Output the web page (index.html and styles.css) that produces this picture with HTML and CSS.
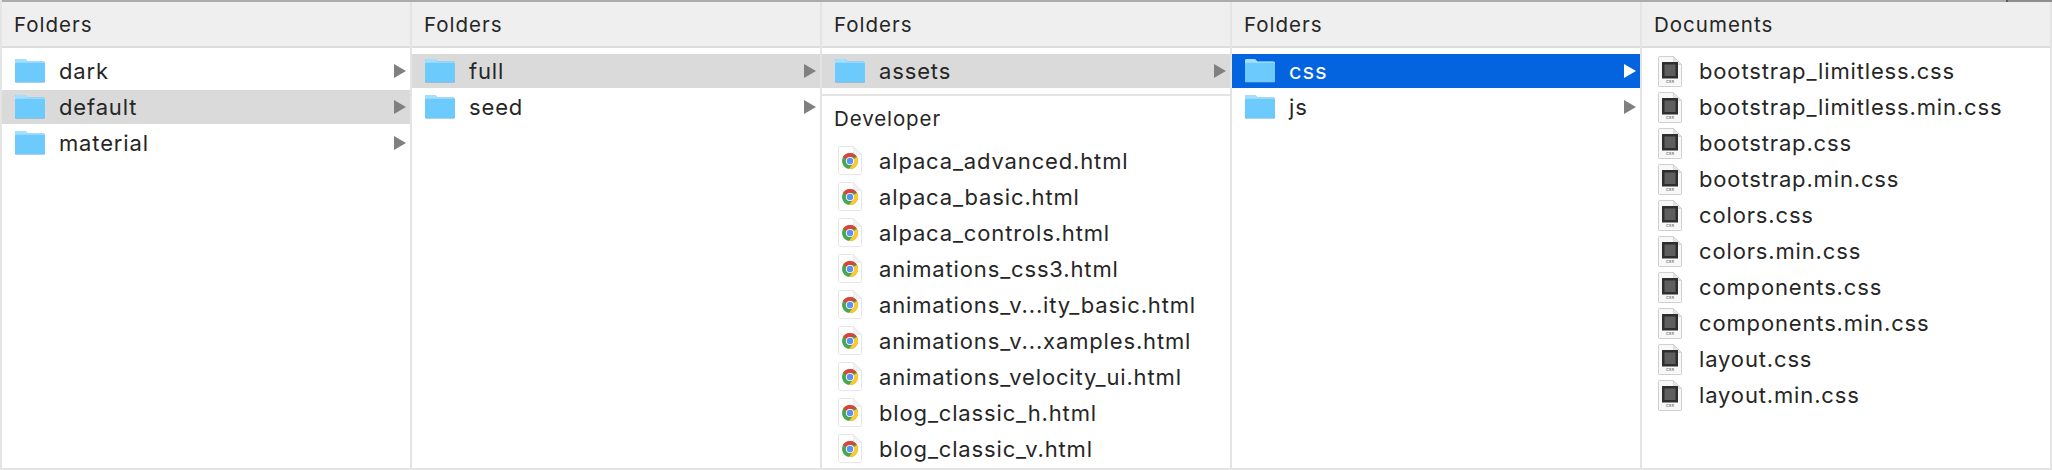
FILE: index.html
```html
<!DOCTYPE html>
<html lang="en">
<head>
    <meta charset="UTF-8">
    <title>Folders</title>
    <link rel="stylesheet" href="styles.css">
</head>
<body>
    <svg class="defs" width="0" height="0">
        <symbol id="folder" viewBox="0 0 30 24">
            <path d="M1 23.5 A1 1 0 0 1 0 22.5 V1.5 A1.5 1.5 0 0 1 1.5 0 H9 A2 2 0 0 1 11 1 L12.5 2.5 H28.5 A1.5 1.5 0 0 1 30 4 V22.5 A1 1 0 0 1 29 23.5 Z" fill="#4fa8d8"/>
            <path d="M1 22.4 A1 1 0 0 1 0 21.4 V1.5 A1.5 1.5 0 0 1 1.5 0 H9 A2 2 0 0 1 11 1 L12.5 2.5 H28.5 A1.5 1.5 0 0 1 30 4 V21.4 A1 1 0 0 1 29 22.4 Z" fill="#a3dfff"/>
            <path d="M0 5 A1.5 1.5 0 0 1 1.5 3.7 H28.5 A1.5 1.5 0 0 1 30 5 V21.4 A1 1 0 0 1 29 22.4 H1 A1 1 0 0 1 0 21.4 Z" fill="#6ccafc"/>
        </symbol>
        <symbol id="chrome" viewBox="0 0 24 29">
            <path d="M.5 1.5 A1 1 0 0 1 1.5 .5 H15.5 L23.5 8.5 V27.5 A1 1 0 0 1 22.5 28.5 H1.5 A1 1 0 0 1 .5 27.5 Z" fill="#fff" stroke="#e6e6e6"/>
            <path d="M15.5 .5 V8.5 H23.5 Z" fill="#f1f1f1" stroke="#e6e6e6" stroke-width=".6"/>
            <circle cx="12" cy="15" r="8" fill="#4aa654"/>
            <path d="M5.1 11 A8 8 0 0 1 18.9 11 H12 A4 4 0 0 0 8.5 13 Z" fill="#dc4437"/>
            <path d="M19 11 A8 8 0 0 1 11 23 L15.5 17 A4 4 0 0 0 15.5 13 Z" fill="#fcc933"/>
            <circle cx="12" cy="15" r="4.1" fill="#fff"/>
            <circle cx="12" cy="15" r="3.2" fill="#5a92f2"/>
        </symbol>
        <symbol id="cssdoc" viewBox="0 0 24 31">
            <path d="M.5 1.5 A1 1 0 0 1 1.5 .5 H15.5 L23.5 8.5 V29.5 A1 1 0 0 1 22.5 30.5 H1.5 A1 1 0 0 1 .5 29.5 Z" fill="#f8f8f8" stroke="#cfcfcf"/>
            <path d="M15.5 .5 V8.5 H23.5 Z" fill="#e4e4e4" stroke="#cfcfcf" stroke-width=".6"/>
            <rect x="4" y="6" width="16" height="16.5" fill="#2e2e2e"/>
            <rect x="6.5" y="8.5" width="11" height="11.5" fill="#5e5e5e"/>
        </symbol>
    </svg>

    <div class="browser">
        <section class="column">
            <h2 class="column-head">Folders</h2>
            <div class="rows">
                <div class="row"><svg class="icon-folder"><use href="#folder"/></svg><span class="name">dark</span><i class="arrow"></i></div>
                <div class="row active"><svg class="icon-folder"><use href="#folder"/></svg><span class="name">default</span><i class="arrow"></i></div>
                <div class="row"><svg class="icon-folder"><use href="#folder"/></svg><span class="name">material</span><i class="arrow"></i></div>
            </div>
        </section>

        <section class="column">
            <h2 class="column-head">Folders</h2>
            <div class="rows">
                <div class="row active"><svg class="icon-folder"><use href="#folder"/></svg><span class="name">full</span><i class="arrow"></i></div>
                <div class="row"><svg class="icon-folder"><use href="#folder"/></svg><span class="name">seed</span><i class="arrow"></i></div>
            </div>
        </section>

        <section class="column">
            <h2 class="column-head">Folders</h2>
            <div class="rows">
                <div class="row active"><svg class="icon-folder"><use href="#folder"/></svg><span class="name">assets</span><i class="arrow"></i></div>
            </div>
            <div class="group-label">Developer</div>
            <div class="rows files">
                <div class="row"><svg class="icon-file"><use href="#chrome"/></svg><span class="name">alpaca_advanced.html</span></div>
                <div class="row"><svg class="icon-file"><use href="#chrome"/></svg><span class="name">alpaca_basic.html</span></div>
                <div class="row"><svg class="icon-file"><use href="#chrome"/></svg><span class="name">alpaca_controls.html</span></div>
                <div class="row"><svg class="icon-file"><use href="#chrome"/></svg><span class="name">animations_css3.html</span></div>
                <div class="row"><svg class="icon-file"><use href="#chrome"/></svg><span class="name">animations_v...ity_basic.html</span></div>
                <div class="row"><svg class="icon-file"><use href="#chrome"/></svg><span class="name">animations_v...xamples.html</span></div>
                <div class="row"><svg class="icon-file"><use href="#chrome"/></svg><span class="name">animations_velocity_ui.html</span></div>
                <div class="row"><svg class="icon-file"><use href="#chrome"/></svg><span class="name">blog_classic_h.html</span></div>
                <div class="row"><svg class="icon-file"><use href="#chrome"/></svg><span class="name">blog_classic_v.html</span></div>
            </div>
        </section>

        <section class="column">
            <h2 class="column-head">Folders</h2>
            <div class="rows">
                <div class="row selected"><svg class="icon-folder"><use href="#folder"/></svg><span class="name">css</span><i class="arrow"></i></div>
                <div class="row"><svg class="icon-folder"><use href="#folder"/></svg><span class="name">js</span><i class="arrow"></i></div>
            </div>
        </section>

        <section class="column">
            <h2 class="column-head">Documents</h2>
            <div class="rows">
                <div class="row"><span class="doc"><svg class="icon-doc"><use href="#cssdoc"/></svg><em class="doc-ext">css</em></span><span class="name">bootstrap_limitless.css</span></div>
                <div class="row"><span class="doc"><svg class="icon-doc"><use href="#cssdoc"/></svg><em class="doc-ext">css</em></span><span class="name">bootstrap_limitless.min.css</span></div>
                <div class="row"><span class="doc"><svg class="icon-doc"><use href="#cssdoc"/></svg><em class="doc-ext">css</em></span><span class="name">bootstrap.css</span></div>
                <div class="row"><span class="doc"><svg class="icon-doc"><use href="#cssdoc"/></svg><em class="doc-ext">css</em></span><span class="name">bootstrap.min.css</span></div>
                <div class="row"><span class="doc"><svg class="icon-doc"><use href="#cssdoc"/></svg><em class="doc-ext">css</em></span><span class="name">colors.css</span></div>
                <div class="row"><span class="doc"><svg class="icon-doc"><use href="#cssdoc"/></svg><em class="doc-ext">css</em></span><span class="name">colors.min.css</span></div>
                <div class="row"><span class="doc"><svg class="icon-doc"><use href="#cssdoc"/></svg><em class="doc-ext">css</em></span><span class="name">components.css</span></div>
                <div class="row"><span class="doc"><svg class="icon-doc"><use href="#cssdoc"/></svg><em class="doc-ext">css</em></span><span class="name">components.min.css</span></div>
                <div class="row"><span class="doc"><svg class="icon-doc"><use href="#cssdoc"/></svg><em class="doc-ext">css</em></span><span class="name">layout.css</span></div>
                <div class="row"><span class="doc"><svg class="icon-doc"><use href="#cssdoc"/></svg><em class="doc-ext">css</em></span><span class="name">layout.min.css</span></div>
            </div>
        </section>
    </div>
</body>
</html>
```

FILE: styles.css
```css
html, body {
    margin: 0;
    height: 100%;
    overflow: hidden;
    background-color: #fff;
}
.defs {
    display: none;
}
.browser {
    display: flex;
    box-sizing: border-box;
    height: 470px;
    padding-top: 2px;
    /* top edge of the window is a bit darker past the right end */
    background: linear-gradient(to right, #acacac 2004px, #5a5a5a 2004px, #5a5a5a 2006px, #8e8e8e 2006px) top / 100% 2px no-repeat;
    border-bottom: 2px solid #e4e4e4;
    border-left: 2px solid #e4e4e4;
    font-family: Inter, "Liberation Sans", sans-serif;
    color: #262626;
}
.column {
    flex: 0 0 410px;
    box-sizing: border-box;
    border-right: 2px solid #e4e4e4;
    overflow: hidden;
}
.column-head {
    box-sizing: border-box;
    height: 46px;
    margin: 0;
    padding-left: 12px;
    background-color: #efefef;
    border-bottom: 2px solid #dcdcdc;
    font-size: 20.5px;
    font-weight: 400;
    letter-spacing: 1px;
    line-height: 45px;
}
.rows {
    display: flex;
    flex-direction: column;
    gap: 2px;
    padding-top: 6px;
}
.row {
    display: flex;
    align-items: center;
    height: 34px;
    padding-left: 13px;
    font-size: 22px;
    letter-spacing: .85px;
}
.active {
    background-color: #dadada;
}
.selected {
    background-color: #0464e0;
    color: #fff;
}
.selected .arrow {
    border-left-color: #fff;
}
.icon-folder {
    flex: none;
    width: 30px;
    height: 24px;
    margin-right: 14px;
}
.icon-file {
    flex: none;
    width: 24px;
    height: 29px;
    margin: 0 20px 0 0;
    position: relative;
    left: 3px;
    top: -1px;
}
.doc {
    position: relative;
    flex: none;
    width: 24px;
    height: 31px;
    margin-left: 3px;
    margin-right: 17px;
}
.icon-doc {
    display: block;
    width: 24px;
    height: 31px;
}
.doc-ext {
    position: absolute;
    left: 0;
    right: 0;
    bottom: 3px;
    font-size: 5px;
    line-height: 6px;
    letter-spacing: 0;
    font-style: normal;
    text-align: center;
    color: #666;
}
.name {
    flex: 1;
    white-space: nowrap;
}
.arrow {
    flex: none;
    width: 0;
    height: 0;
    margin-right: 4px;
    border-left: 12px solid #808080;
    border-top: 7px solid transparent;
    border-bottom: 7px solid transparent;
}
.group-label {
    box-sizing: border-box;
    height: 46px;
    margin-top: 6px;
    padding-left: 12px;
    border-top: 2px solid #e4e4e4;
    font-size: 20.5px;
    letter-spacing: .9px;
    line-height: 46px;
}
.files {
    padding-top: 4px;
}
```
